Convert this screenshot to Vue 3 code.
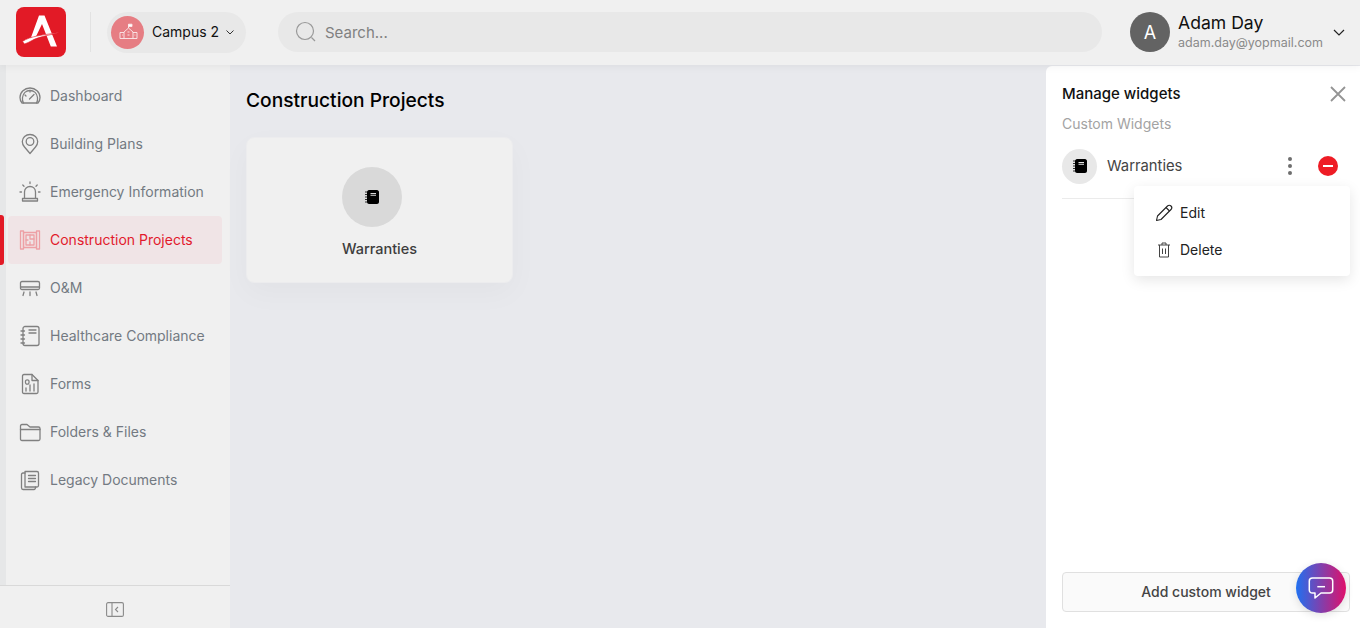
<template>
  <div class="page">
    <header class="topbar">
      <div class="logo">
        <svg width="50" height="50" viewBox="0 0 50 50">
          <path d="M23 8.500H28.500L41 39.500H34.800L26 17L19.500 30.500H15Z" fill="#fff" />
          <path d="M6.500 34.500C14 29 28 27.800 43.500 25.600C31 28.500 21 30.500 16 33.500C13.500 35 11 36 8.500 37Z" fill="#fff" stroke="#e21a26" stroke-width="0.6" />
        </svg>
      </div>
      <div class="divider"></div>
      <div class="campus">
        <div class="campus-icon">
          <svg width="22" height="22" viewBox="0 0 22 22" fill="none" stroke="#fbeaeb" stroke-width="0.9">
            <path d="M11.500 7V3.200" />
            <path d="M11.500 3.200H15V5.500H11.500Z" fill="#fff" />
            <path d="M7 11L11.500 7L16 11V17.500H7Z" />
            <path d="M7 11.500H3V17.500H7M16 11.500H20V17.500H16" />
            <path d="M10.500 11H12.500M10.500 14H12.500M5 14H5.800M17.500 14H18.300" />
          </svg>
        </div>
        <span class="campus-name">Campus 2</span>
        <svg width="8" height="5" viewBox="0 0 8 5" fill="none" stroke="#333" stroke-width="1"><path d="M0.500 0.500L4 4L7.500 0.500" /></svg>
      </div>
      <div class="search">
        <svg width="22" height="22" viewBox="0 0 22 22" fill="none" stroke="#999" stroke-width="1.2">
          <circle cx="10" cy="10" r="8.500" />
          <path d="M16.500 16.500L20 20" />
        </svg>
        <span>Search...</span>
      </div>
      <div class="user">
        <div class="avatar">A</div>
        <div class="user-text">
          <div class="user-name">Adam Day</div>
          <div class="user-mail">adam.day@yopmail.com</div>
        </div>
        <svg class="user-arrow" width="12" height="7" viewBox="0 0 12 7" fill="none" stroke="#222" stroke-width="1.2"><path d="M1 1L6 6L11 1" /></svg>
      </div>
    </header>

    <div class="body">
      <aside class="sidebar">
        <nav class="menu">
          <div v-for="item in menu" :key="item.label" class="menu-row" :class="{ active: item.active }">
            <div class="menu-item">
              <svg width="22" height="22" viewBox="0 0 22 22" fill="none" :stroke="item.active ? '#eda0a5' : '#808080'" stroke-width="1.3" stroke-linecap="round" stroke-linejoin="round">
                <path v-for="(d, i) in item.paths" :key="i" :d="d" />
              </svg>
              <span>{{ item.label }}</span>
            </div>
          </div>
        </nav>
        <div class="collapse">
          <svg width="18" height="15" viewBox="0 0 18 15" fill="none" stroke="#8a8a8a" stroke-width="1.100">
            <rect x="0.600" y="0.600" width="16.800" height="13.800" rx="1.500" />
            <path d="M6 0.600V14.400" />
            <path d="M12 5L9.500 7.500L12 10" />
          </svg>
        </div>
      </aside>

      <main class="content">
        <h1>Construction Projects</h1>
        <div class="card">
          <div class="card-circle">
            <svg width="14" height="16" viewBox="0 0 14 16">
              <path :d="bookPath" fill="#000" />
              <path d="M5.500 4H11V5.200H5.500ZM5.500 6.200H11V7H5.500Z" fill="#d8d8d8" />
              <path d="M0 3H2.500M0 5.500H2.500M0 8H2.500M0 10.500H2.500M0 13H2.500" stroke="#000" stroke-width="0.800" />
            </svg>
          </div>
          <div class="card-label">Warranties</div>
        </div>
      </main>

      <section class="panel">
        <div class="panel-head">
          <h2>Manage widgets</h2>
          <svg width="16" height="16" viewBox="0 0 16 16" fill="none" stroke="#949494" stroke-width="1.800"><path d="M1 1L15 15M15 1L1 15" /></svg>
        </div>
        <div class="panel-sub">Custom Widgets</div>
        <div class="widget-row">
          <div class="widget-circle">
            <svg width="14" height="16" viewBox="0 0 14 16">
              <path :d="bookPath" fill="#000" />
              <path d="M5.500 4H11V5.200H5.500ZM5.500 6.200H11V7H5.500Z" fill="#e8e8e8" />
              <path d="M0 3H2.500M0 5.500H2.500M0 8H2.500M0 10.500H2.500M0 13H2.500" stroke="#000" stroke-width="0.800" />
            </svg>
          </div>
          <span class="widget-name">Warranties</span>
          <div class="dots"><i></i><i></i><i></i></div>
          <div class="remove"><b></b></div>
        </div>
        <div class="panel-spacer"></div>
        <button class="add-btn"><span>Add custom widget</span></button>

        <div class="dropdown">
          <div class="drop-item">
            <svg width="18" height="18" viewBox="0 0 18 18" fill="none" stroke="#222" stroke-width="1.100" stroke-linejoin="round">
              <path d="M1.500 16.500L2.500 12L12.500 2C13.500 1 15 1 16 2C17 3 17 4.500 16 5.500L6 15.500Z" />
              <path d="M11 3.500L14.500 7" />
            </svg>
            <span>Edit</span>
          </div>
          <div class="drop-item">
            <svg width="18" height="18" viewBox="0 0 18 18" fill="none" stroke="#444" stroke-width="1">
              <path d="M3 4H15M7 4V2H11V4" />
              <path d="M4.500 4V16H13.500V4" />
              <path d="M7.500 7.500V13M10.500 7.500V13" />
            </svg>
            <span>Delete</span>
          </div>
        </div>
      </section>
    </div>

    <div class="chat">
      <svg width="28" height="28" viewBox="0 0 28 28" fill="none" stroke="#fff" stroke-width="1.500" stroke-linejoin="round">
        <path d="M5.500 4H22.500C24.500 4 25.700 5.200 25.700 7V16C25.700 18 24.500 19 22.500 19H14L8 24V19H5.500C3.500 19 2.300 18 2.300 16V7C2.300 5.200 3.500 4 5.500 4Z" />
        <path d="M10.300 12.700H18" />
      </svg>
    </div>
  </div>
</template>

<script setup>
const bookPath = 'M4 1H12C13 1 14 2 14 3V13C14 14 13 15 12 15H4C3 15 2 14 2 13V3C2 2 3 1 4 1Z'

const menu = [
  {
    label: 'Dashboard',
    paths: [
      'M3 18C1.500 16.500 1 14.500 1 12.500C1 7 5.500 3 11 3C16.500 3 21 7 21 12.500C21 14.500 20.500 16.500 19 18Z',
      'M4.500 18C3.500 16.500 3.200 14.500 3.500 12.500C4 8.500 7 5.500 11 5.500C15 5.500 18 8.500 18.500 12.500C18.800 14.500 18.500 16.500 17.500 18',
      'M10.500 14L15 9.500',
      'M6 10L7 11M11 5.500V7'
    ]
  },
  {
    label: 'Building Plans',
    paths: [
      'M11 20.500L5.500 14C4 12.300 3.300 10.500 3.300 8.500C3.300 4.500 6.800 1.500 11 1.500C15.200 1.500 18.700 4.500 18.700 8.500C18.700 10.500 18 12.300 16.500 14Z',
      'M11 4.700A3.800 3.800 0 1 0 11 12.300A3.800 3.800 0 1 0 11 4.700Z'
    ]
  },
  {
    label: 'Emergency Information',
    paths: [
      'M5.500 17V11C5.500 7.500 8 5.500 11 5.500C14 5.500 16.500 7.500 16.500 11V17',
      'M3.500 17.500H18.500V20H3.500Z',
      'M11 1V2.500M3.800 4L5 5.200M18.200 4L17 5.200M1 11H2.500M19.500 11H21'
    ]
  },
  {
    label: 'Construction Projects',
    active: true,
    paths: [
      'M1.500 2H4.500V20H1.500Z',
      'M17.500 2H20.500V20H17.500Z',
      'M4.500 3.500H17.500V18.500H4.500Z',
      'M7 6H15V16H7Z',
      'M11 6V10H15M11 13V16M7 11H9'
    ]
  },
  {
    label: 'O&M',
    paths: [
      'M3 4.500H19C20 4.500 20.500 5 20.500 6V11C20.500 12 20 12.500 19 12.500H3C2 12.500 1.500 12 1.500 11V6C1.500 5 2 4.500 3 4.500Z',
      'M2 10H20',
      'M5 15L4 18.500M11 15V18.500M17 15L18 18.500'
    ]
  },
  {
    label: 'Healthcare Compliance',
    paths: [
      'M6 1.500H18C19 1.500 20 2.500 20 3.500V18.500C20 19.500 19 20.500 18 20.500H6C5 20.500 4 19.500 4 18.500V3.500C4 2.500 5 1.500 6 1.500Z',
      'M2 6H5.500M2 10H5.500M2 14H5.500M2 18H5.500',
      'M10 5H17M10 8H17'
    ]
  },
  {
    label: 'Forms',
    paths: [
      'M5 1.500H13L19 7.500V19C19 20 18 20.500 17.500 20.500H5C4 20.500 3.500 20 3.500 19V3C3.500 2 4 1.500 5 1.500Z',
      'M13 1.500V7.500H19',
      'M7 18V15M11 18V12M15 18V11',
      'M6.500 9A1.800 1.800 0 1 0 10 9A1.800 1.800 0 1 0 6.500 9Z'
    ]
  },
  {
    label: 'Folders & Files',
    paths: [
      'M1.500 5C1.500 4 2 3.500 3 3.500H8L11 6H19.500C20.500 6 21 6.500 21 7.500V18C21 19 20.500 19.500 19.500 19.500H3C2 19.500 1.500 19 1.500 18Z',
      'M1.500 8.500H21'
    ]
  },
  {
    label: 'Legacy Documents',
    paths: [
      'M6 2.500H18C19 2.500 19.500 3 19.500 4V16.500C19.500 17.500 19 18 18 18H6Z',
      'M6 4H4C3 4 2.500 4.500 2.500 5.500V18.500C2.500 19.500 3 20.500 4 20.500H15C16 20.500 16.500 19.500 16.500 18',
      'M9.500 6.500H16.500M9.500 9.500H16.500M9.500 12.500H16.500'
    ]
  }
]
</script>

<style>
html, body {
  margin: 0;
  height: 100%;
  overflow: hidden;
}
</style>

<style scoped>
.page {
  position: relative;
  width: 1360px;
  height: 628px;
  overflow: hidden;
  background: #e8e9ed;
  font-family: Inter, "Liberation Sans", sans-serif;
  display: flex;
  flex-direction: column;
}

.topbar {
  height: 65px;
  flex-shrink: 0;
  background: #f0f0f0;
  display: flex;
  align-items: center;
  padding: 0 0 1px 16px;
  box-sizing: border-box;
  box-shadow: 0 2px 8px rgba(0, 0, 0, 0.05);
  position: relative;
  z-index: 2;
}

.logo {
  width: 50px;
  height: 50px;
  background: #e21a26;
  border-radius: 8px;
}

.logo svg {
  display: block;
}

.divider {
  width: 1px;
  height: 40px;
  background: #e2e2e2;
  margin: 0 16px 0 24px;
}

.campus {
  width: 139px;
  height: 41px;
  box-sizing: border-box;
  padding-left: 4px;
  border-radius: 21px;
  background: #e8e8e8;
  display: flex;
  align-items: center;
}

.campus-icon {
  width: 33px;
  height: 33px;
  border-radius: 50%;
  background: #e67d83;
  display: flex;
  align-items: center;
  justify-content: center;
}

.campus-name {
  font-size: 14px;
  color: #111;
  margin: 0 7px 1px 8px;
}

.search {
  width: 824px;
  height: 40px;
  margin-left: 32px;
  box-sizing: border-box;
  padding-left: 17px;
  border-radius: 20px;
  background: #e8e8e8;
  display: flex;
  align-items: center;
  gap: 8px;
  font-size: 15px;
  color: #808080;
}

.user {
  display: flex;
  align-items: center;
  margin-left: 28px;
}

.avatar {
  width: 40px;
  height: 40px;
  border-radius: 50%;
  background: #636363;
  color: #fff;
  font-size: 18px;
  display: flex;
  align-items: center;
  justify-content: center;
}

.user-text {
  margin-left: 8px;
}

.user-name {
  font-size: 17.600px;
  line-height: 22px;
  color: #111;
}

.user-mail {
  font-size: 12.500px;
  line-height: 18px;
  color: #8a8a8a;
}

.user-arrow {
  margin-left: 10px;
}

.body {
  flex: 1;
  display: flex;
  min-height: 0;
}

.sidebar {
  width: 230px;
  flex-shrink: 0;
  display: flex;
  flex-direction: column;
  background: linear-gradient(to right, #e6e7e8 0, #e6e7e8 6px, #f0f0f0 6px);
}

.menu {
  flex: 1;
  padding-top: 7px;
}

.menu-row {
  height: 48px;
  padding: 0 8px;
  position: relative;
}

.menu-item {
  height: 48px;
  box-sizing: border-box;
  padding-left: 11px;
  border-radius: 4px;
  display: flex;
  align-items: center;
  gap: 9px;
  font-size: 14px;
  color: #737a82;
}

.menu-item span {
  margin-bottom: 2px;
}

.menu-row.active .menu-item {
  background: #f0e4e6;
  color: #e21a2c;
}

.menu-row.active::before {
  content: "";
  position: absolute;
  left: 0;
  top: -1px;
  bottom: -1px;
  width: 4px;
  background: #e21a26;
  border-radius: 0 3px 3px 0;
}

.collapse {
  height: 43px;
  box-sizing: border-box;
  padding-top: 5px;
  background: #f0f0f0;
  border-top: 1px solid #d9d9d9;
  display: flex;
  align-items: center;
  justify-content: center;
}

.content {
  flex: 1;
  padding: 0 16px;
}

.content h1 {
  margin: 21px 0 0;
  font-size: 19.200px;
  line-height: 28px;
  font-weight: 500;
  color: #000;
}

.card {
  width: 267px;
  height: 146px;
  margin-top: 23px;
  background: #f0f0f0;
  border: 1px solid #ececee;
  border-radius: 8px;
  box-shadow: 0 10px 30px rgba(0, 0, 0, 0.03);
  display: flex;
  flex-direction: column;
  align-items: center;
  padding-top: 29px;
  box-sizing: border-box;
}

.card-circle {
  width: 60px;
  height: 60px;
  margin-right: 15px;
  border-radius: 50%;
  background: #d9d9d9;
  display: flex;
  align-items: center;
  justify-content: center;
}

.card-label {
  margin-top: 13px;
  font-size: 14.500px;
  font-weight: 500;
  color: #3d3d3d;
}

.panel {
  width: 314px;
  flex-shrink: 0;
  margin-top: 1px;
  background: #fff;
  border-radius: 6px 0 0 0;
  position: relative;
  box-sizing: border-box;
  padding: 0 10px 16px 16px;
  display: flex;
  flex-direction: column;
}

.panel-head {
  display: flex;
  align-items: center;
  justify-content: space-between;
  padding: 19px 4px 0 0;
  height: 36px;
  box-sizing: border-box;
}

.panel-head h2 {
  margin: 0;
  font-size: 15px;
  font-weight: 500;
  color: #111;
}

.panel-sub {
  margin-top: 12px;
  font-size: 14px;
  line-height: 20px;
  color: #a3a3a3;
}

.widget-row {
  height: 50px;
  margin-top: 7px;
  padding-bottom: 7px;
  margin-right: 2px;
  border-bottom: 1px solid #ebebeb;
  display: flex;
  align-items: center;
  box-sizing: content-box;
}

.widget-circle {
  width: 35px;
  height: 35px;
  border-radius: 50%;
  background: #e8e8e8;
  display: flex;
  align-items: center;
  justify-content: center;
}

.widget-name {
  margin: 0 0 1px 10px;
  font-size: 14.800px;
  color: #444;
  flex: 1;
}

.dots {
  display: flex;
  flex-direction: column;
  gap: 3px;
  margin-right: 26px;
}

.dots i {
  width: 4px;
  height: 4px;
  border-radius: 50%;
  background: #6e6e6e;
}

.remove {
  width: 20px;
  height: 20px;
  margin-right: 10px;
  border-radius: 50%;
  background: #ee1c25;
  display: flex;
  align-items: center;
  justify-content: center;
}

.remove b {
  width: 10px;
  height: 2px;
  background: #fff;
}

.panel-spacer {
  flex: 1;
}

.add-btn {
  height: 40px;
  background: #fafafa;
  border: 1px solid #e0e0e0;
  border-radius: 4px;
  font-family: inherit;
  font-size: 14px;
  font-weight: 500;
  color: #444;
  padding: 0 0 2px;
}

.dropdown {
  position: absolute;
  top: 120px;
  left: 88px;
  width: 216px;
  height: 90px;
  box-sizing: border-box;
  padding-top: 8px;
  background: #fff;
  border-radius: 4px;
  box-shadow: 0 4px 14px rgba(0, 0, 0, 0.1);
}

.drop-item {
  height: 37px;
  display: flex;
  align-items: center;
  gap: 7px;
  padding-left: 21px;
  font-size: 14px;
  color: #222;
}

.chat {
  position: absolute;
  left: 1296px;
  top: 563px;
  width: 50px;
  height: 50px;
  border-radius: 50%;
  background: linear-gradient(to right, #2070f0, #e0106a);
  box-shadow: 0 2px 8px rgba(0, 0, 0, 0.12);
  display: flex;
  align-items: center;
  justify-content: center;
}
</style>
